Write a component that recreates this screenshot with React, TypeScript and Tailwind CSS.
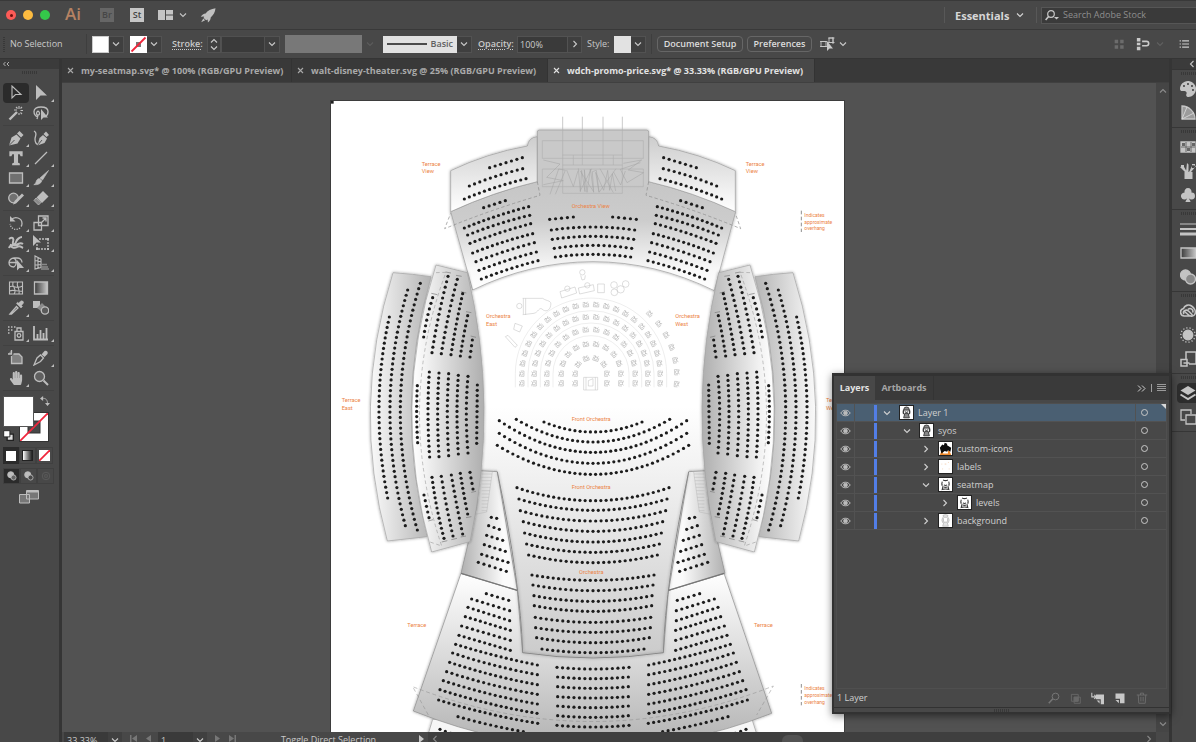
import type { ReactNode } from "react";
import { BsSuitClubFill } from "react-icons/bs";
import { FaHandPaper, FaPalette } from "react-icons/fa";

type Row = [number, number, number, number, number?, number?];

/* ---------- small shared pieces ---------- */

function Glyph({ size = 16, children }: { size?: number; children: ReactNode }) {
  return (
    <svg
      width={size}
      height={size}
      viewBox="0 0 16 16"
      fill="none"
      stroke="currentColor"
      strokeWidth="1.3"
      className="shrink-0"
      aria-hidden="true"
    >
      {children}
    </svg>
  );
}

function Chevron({ dir = "down" }: { dir?: "down" | "up" | "right" | "left" }) {
  const paths = {
    down: "M1 2.5 4 5.5 7 2.5",
    up: "M1 5.5 4 2.5 7 5.5",
    right: "M2.5 1 5.5 4 2.5 7",
    left: "M5.5 1 2.5 4 5.5 7",
  };
  return (
    <svg width="8" height="8" viewBox="0 0 8 8" fill="none" stroke="currentColor" strokeWidth="1.1" className="shrink-0" aria-hidden="true">
      <path d={paths[dir]} />
    </svg>
  );
}

function DropButton({ label, dim = false }: { label: string; dim?: boolean }) {
  return (
    <button
      aria-label={label}
      className={`flex h-[17px] w-[15px] shrink-0 items-center justify-center ${dim ? "text-[#5c5c5c]" : "border border-l-0 border-[#525252] bg-[#3f3f3f] text-[#c8c8c8]"}`}
    >
      <Chevron />
    </button>
  );
}

function Grip() {
  return (
    <div className="mx-auto flex gap-px">
      {Array.from({ length: 8 }, (_, i) => (
        <span key={i} className="h-[3px] w-px bg-[#383838]" />
      ))}
    </div>
  );
}

/* ---------- title bar ---------- */

function TitleBar() {
  return (
    <header className="flex h-[30px] shrink-0 items-center border-t border-b border-[#393939] bg-[#484848]">
      <div className="flex gap-[7px] pl-[6px]">
        <button aria-label="Close window" className="flex size-[10px] items-center justify-center rounded-full bg-[#fc5b57]">
          <span className="size-[3px] rounded-full bg-[#6a0f0c]" />
        </button>
        <button aria-label="Minimize window" className="size-[10px] rounded-full bg-[#fdbc40]" />
        <button aria-label="Zoom window" className="size-[10px] rounded-full bg-[#34c84a]" />
      </div>
      <span className="ml-[15px] w-[35px] pb-1 font-['Open_Sans',sans-serif] text-[17px] leading-none font-semibold text-[#b58263]">Ai</span>
      <button className="size-[14px] bg-[#666] text-center text-[9px] leading-[14px] font-semibold text-[#464646]">Br</button>
      <button className="ml-4 size-[14px] bg-[#c6c6c6] text-center text-[9px] leading-[14px] font-semibold text-[#444]">St</button>
      <button aria-label="Arrange documents" className="ml-[14px] flex items-center gap-[6px] text-[#c4c4c4]">
        <svg width="15" height="10" viewBox="0 0 15 11" preserveAspectRatio="none" fill="currentColor" aria-hidden="true">
          <path d="M0 0h7v11H0zM8 0h7v5H8zM8 6h7v5H8z" />
        </svg>
        <Chevron />
      </button>
      <button aria-label="GPU performance" className="ml-[13px] text-[#c0c0c0]">
        <svg width="16" height="15" viewBox="0 0 16 15" fill="currentColor" aria-hidden="true">
          <path d="M15.5.3C11 .8 7.6 2.8 5.6 5.6 3.6 5.7 2 7 .8 8.8l3.400-.3-.6 1.400 2.600 2.300 1.500-.8.2 3c1.700-1.300 2.800-3 2.800-5C13.300 7.200 15.200 4.300 15.500.3z" />
          <path d="M3.300 10.600 1.200 14.300l3.900-2z" />
        </svg>
      </button>
      <div className="ml-auto flex items-center">
        <span className="h-4 w-px bg-[#585858]" />
        <label className="ml-[10px] flex w-[81px] items-center text-[#d6d6d6]">
          <select aria-label="Workspace" className="w-[61px] appearance-none bg-transparent text-[11px] leading-none font-bold">
            <option>Essentials</option>
          </select>
          <Chevron />
        </label>
        <span className="mr-[4px] h-4 w-px bg-[#585858]" />
        <label className="flex h-[17px] w-[155px] items-center gap-[4px] border border-r-0 border-[#565656] bg-[#3a3a3a] pl-[3px] text-[#c8c8c8]">
          <svg width="14" height="11" viewBox="0 0 14 11" fill="none" stroke="currentColor" aria-hidden="true">
            <circle cx="6" cy="4" r="3.300" strokeWidth="1.200" />
            <path d="M3.600 6.500.6 10" strokeWidth="1.600" />
            <path d="M9 7h5l-2.500 2.600z" fill="currentColor" stroke="none" />
          </svg>
          <input aria-label="Search Adobe Stock" placeholder="Search Adobe Stock" className="w-[120px] bg-transparent text-[9px] outline-none placeholder:text-[#8e8e8e]" />
        </label>
      </div>
    </header>
  );
}

/* ---------- control bar ---------- */

function ControlBar() {
  return (
    <div className="flex h-[29px] shrink-0 items-center border-b border-[#353535] bg-[#484848] text-[#cacaca]">
      <div className="ml-[3px] flex flex-col gap-px">
        {Array.from({ length: 8 }, (_, i) => (
          <span key={i} className="h-px w-[2px] bg-[#383838]" />
        ))}
      </div>
      <span className="ml-[5px] w-[76px] shrink-0">No Selection</span>
      <span className="h-5 w-px bg-[#3e3e3e]" />
      <button aria-label="Fill" className="ml-[5px] size-[17px] shrink-0 border border-[#ccc] bg-white" />
      <DropButton label="Fill colours" />
      <button aria-label="Stroke colour" className="ml-[6px] size-[17px] shrink-0 bg-white">
        <svg viewBox="0 0 17 17" width="17" height="17" aria-hidden="true">
          <rect x="6" y="6" width="5" height="5" fill="#777" />
          <path d="M1.500 15.500 15.500 1.500" stroke="#f0263c" strokeWidth="1.800" />
        </svg>
      </button>
      <DropButton label="Stroke colours" />
      <label htmlFor="stroke-width" className="ml-[10px] w-[35px] shrink-0 font-semibold underline decoration-dotted underline-offset-2">Stroke:</label>
      <div className="flex h-[17px] w-[14px] shrink-0 flex-col items-center justify-between border border-[#525252] bg-[#404040]">
        <button aria-label="Increase stroke" className="h-[7px] overflow-hidden"><Chevron dir="up" /></button>
        <button aria-label="Decrease stroke" className="h-[8px] overflow-hidden"><Chevron /></button>
      </div>
      <input id="stroke-width" className="h-[17px] w-[44px] shrink-0 border border-[#505050] bg-[#3a3a3a] px-1 outline-none" />
      <DropButton label="Stroke widths" />
      <button aria-label="Variable width profile" className="ml-[5px] h-[18px] w-[77px] shrink-0 bg-[#787878]" />
      <DropButton label="Width profiles" dim />
      <button className="ml-[6px] flex h-[17px] w-[74px] shrink-0 items-center justify-between bg-[#e2e2e2] px-1 font-semibold text-[#606060]">
        <span className="h-[2px] w-10 bg-[#4c4c4c]" />
        Basic
      </button>
      <DropButton label="Brushes" />
      <label htmlFor="opacity" className="ml-[6px] w-[39px] shrink-0 font-semibold underline decoration-dotted underline-offset-2">Opacity:</label>
      <input id="opacity" defaultValue="100%" className="h-[17px] w-[51px] shrink-0 border border-[#525252] bg-[#3a3a3a] px-[2px] outline-none" />
      <button aria-label="Opacity slider" className="flex h-[17px] w-[14px] shrink-0 items-center justify-center border border-l-0 border-[#525252] bg-[#3f3f3f]">
        <Chevron dir="right" />
      </button>
      <span className="ml-[5px] w-[27px] shrink-0">Style:</span>
      <button aria-label="Graphic style" className="size-[17px] shrink-0 bg-[#e2e2e2]" />
      <DropButton label="Graphic styles" />
      <span className="ml-[5px] h-5 w-px bg-[#3e3e3e]" />
      <button className="ml-[5px] h-4 w-[86px] shrink-0 rounded-sm border border-[#666] font-semibold text-[#dcdcdc]">Document Setup</button>
      <button className="ml-[4px] h-4 w-[65px] shrink-0 rounded-sm border border-[#666] font-semibold text-[#dcdcdc]">Preferences</button>
      <button aria-label="Select similar" className="ml-2 flex items-center gap-[3px]">
        <Glyph>
          <path d="M1 5.500h5v5H1zM0 5.500h7M0 10.500h7M9 2h4v4.500H9zM8 2h6.500M8 6.500h6.500M13 1v7" strokeWidth=".9" />
          <path d="M7 5v10l2.500-2.600H13z" fill="currentColor" stroke="none" />
        </Glyph>
        <Chevron />
      </button>
      <div className="ml-auto flex items-center gap-[11px] pr-[7px]">
        <span className="text-[#6c6c6c]">
          <Glyph size={11}>
            <path d="M1 1h5v5H1zM9 1h5v5H9zM1 9h5v5H1zM9 9h5v5H9z" fill="currentColor" stroke="none" />
          </Glyph>
        </span>
        <button aria-label="Align to" className="flex items-center gap-[6px]">
          <Glyph size={14}>
            <path d="M1 1h4v4H1zM1 6.500h4v3H1zM1 11h4v4H1z" fill="currentColor" stroke="none" />
            <path d="M7 5h5a2.500 2.500 0 0 1 0 5H7" strokeWidth="1.800" />
          </Glyph>
          <span className="text-[#606060]"><Chevron /></span>
        </button>
        <button aria-label="Panel menu" className="pl-1">
          <Glyph size={10}>
            <path d="M1 3h2M1 8h2M1 13h2M5 3h11M5 8h11M5 13h11" strokeWidth="1.800" />
          </Glyph>
        </button>
      </div>
    </div>
  );
}

/* ---------- tools ---------- */

const tools: Record<string, ReactNode> = {
  Selection: <path d="M4 1v12l3.500-3.500H13z" strokeWidth="1.100" />,
  "Direct Selection": <path d="M3 0v15l4.500-4.500H14z" fill="currentColor" stroke="none" />,
  "Magic Wand": (
    <>
      <path d="M1.500 14.500 9 7" strokeWidth="2.400" />
      <path d="M11 1v3M11 8v2M6 5h3M12.500 5.500H15M8 2l1.500 1.500M14 2l-1.500 1.500M14 9l-1.500-1.500" strokeWidth="1.100" />
    </>
  ),
  Lasso: (
    <>
      <path d="M5 12C2 11 1 9 1 6.500 1 3.500 4 2 8 2s7 1.500 7 4.500-1 4-2 4.500M5 6c-2 1-2 4 0 4s2-3 0-4zM5 10l-1 4" />
      <path d="M8 4v11l2.500-2.500H15z" fill="currentColor" stroke="none" />
    </>
  ),
  Pen: (
    <>
      <path d="M1 15.500 3.500 7.500l5-3 4 4-3 5z" fill="currentColor" stroke="none" />
      <path d="M9 3.500 11.500 1 15.500 5 13 7.500z" fill="currentColor" stroke="none" />
      <path d="m1 15.500 5.500-5.500" stroke="#484848" strokeWidth=".9" />
    </>
  ),
  Curvature: (
    <>
      <path d="M4.500 15.500 6.500 8 10 5l4 3.500-2.500 4.500z" fill="currentColor" stroke="none" />
      <path d="M10.500 4 13 1.500 16 5l-2.500 2z" fill="currentColor" stroke="none" />
      <path d="M1 1c4 2 1 5 1 8s1 5 3 5.500" />
      <path d="m4.500 15.500 4.500-5.500" stroke="#484848" strokeWidth=".9" />
    </>
  ),
  Type: <path d="M2 2h12v3.500h-1L12 3.500H9.400V13l1.800.8v.7H4.800v-.7l1.800-.8V3.500H4L3 5.500H2z" fill="currentColor" />,
  "Line Segment": <path d="M2 14 14 2" />,
  Rectangle: <path d="M1.500 3h13v10h-13z" fill="#707070" />,
  Paintbrush: (
    <path d="M15.500.5 9.500 10 7 8zM6.300 8.600l2.500 2.200c-.8 3-4 4.200-8 3.900 2-.7 2-2.300 2.700-4 .5-1.200 1.600-2 2.800-2.100z" fill="currentColor" strokeWidth=".7" />
  ),
  Shaper: (
    <>
      <circle cx="5.500" cy="8" r="4.800" fill="#707070" />
      <path d="M5 14.500 6.500 11 14 3.500l2 2-8 8z" fill="currentColor" stroke="none" />
    </>
  ),
  Eraser: (
    <>
      <path d="M10 1 15.500 6.500 9 13 3.500 7.500z" fill="currentColor" stroke="none" />
      <path d="M3 8 1 10.500l4.500 4.500 2.500-2.500z" fill="#8a8a8a" stroke="currentColor" strokeWidth=".8" />
    </>
  ),
  Rotate: (
    <>
      <path d="M3 5c4-4.500 11-2 11 3.500 0 1.500-.5 2.500-1 3" />
      <path d="M12 13c-4 3-9 1-10-4" strokeDasharray="1.200 1.300" />
      <path d="M2 1v5.500h5.500z" fill="currentColor" stroke="none" />
    </>
  ),
  Scale: <path d="M5.500 1h9.500v9.500H5.500zM1 7.500h7.500V15H1zM8 8l5-5M9.500 3H13v3.500" />,
  Width: (
    <path d="M1 4c4-3 5 0 4 3s2 3 3 0 4-5 6-5M1 13c2-5 4-2 7-3s4-3 7-1M3 9c-1 3 3 5 6 3s4 0 6 1" strokeWidth="2" />
  ),
  "Free Transform": (
    <>
      <path d="M6 4h9v10H4V8" strokeDasharray="2 1" />
      <path d="M0 0v11l3.500-3.500H8z" fill="currentColor" stroke="none" />
      <path d="M14 3h2v2h-2zM14 13h2v2h-2zM3 13h2v2H3z" fill="currentColor" stroke="none" />
    </>
  ),
  "Shape Builder": (
    <>
      <path d="M6 12C2 12 1 9.500 1 7.500S3 3 6 3h3c3 0 5 2 5 4.500M6 3c3 2 3 7 0 9M1 7.500h8" />
      <path d="M9 5v10.500l2.500-2.500H16z" fill="currentColor" stroke="none" />
    </>
  ),
  "Perspective Grid": (
    <>
      <path d="M2 1v13l6-1.500V4zM2 5.500l6 1M2 10l6-.5M5 2.500v10.800" strokeWidth="1.100" />
      <path d="M8 12h7M8 9.500h6M8 14h8" stroke="#8a8a8a" strokeWidth="1.300" />
    </>
  ),
  Mesh: <path d="M1.500 2h13v12h-13zM1.500 7c4-3 6 3 13-1M5 2c-2 5 5 7 1 12M10 2c-3 4 3 7 1 12M1.500 11c4-2 8 1 13 0" strokeWidth="1.100" />,
  Gradient: <path d="M1.500 2h13v12h-13z" fill="url(#ramp)" />,
  Eyedropper: (
    <>
      <path d="M2 14 8.500 6.500l1.500 1.500-6.500 6z" strokeWidth="1.300" />
      <path d="M8.500 3.500 13 8l1.500-1.500-1-1L15.500 3c.5-1.500-1.500-2.500-2.500-2L10.500 3l-1-.8z" fill="currentColor" stroke="currentColor" strokeWidth=".5" />
    </>
  ),
  Blend: (
    <>
      <rect x="0" y="1" width="7" height="7" fill="currentColor" stroke="none" />
      <path d="m4 8 5-5 3.500 3.500-4.500 4.500z" fill="#8a8a8a" stroke="none" />
      <circle cx="12" cy="10.500" r="3.700" fill="#5a5a5a" />
    </>
  ),
  "Symbol Sprayer": (
    <>
      <path d="M7 6.500h8V15H7zM9 6V3h4v3" />
      <circle cx="11" cy="10.500" r="1.800" />
      <path d="M0 2h1.500M3 2h1.500M0 5h1.500M3 5h1.500M0 8h1.500M6 2h1.500" strokeWidth="1.500" />
    </>
  ),
  "Column Graph": <path d="M1 1v13.500h14M4.500 13.500V9M7.500 13.500V5M10.500 13.500V8M13.500 13.500V3" strokeWidth="1.800" />,
  Artboard: <path d="M3.500 0v4H0M3.500 6v7.500H14V7l-3-3H5.500" fill="#808080" />,
  Slice: (
    <>
      <path d="M1 15 4 8l3.500-3 3 3-3 3.500z" />
      <path d="m8.500 4.500 3-3.500c2-1 4 1 3 3L11.500 7z" fill="currentColor" stroke="none" />
    </>
  ),
  Zoom: (
    <>
      <circle cx="6.500" cy="6.500" r="5" fill="#606060" />
      <path d="m10.500 10.500 4.500 4.500" strokeWidth="2" />
    </>
  ),
};

const toolGroups: string[][] = [
  ["Selection", "Direct Selection", "Magic Wand", "Lasso"],
  ["Pen", "Curvature", "Type", "Line Segment", "Rectangle", "Paintbrush", "Shaper", "Eraser"],
  ["Rotate", "Scale", "Width", "Free Transform", "Shape Builder", "Perspective Grid"],
  ["Mesh", "Gradient", "Eyedropper", "Blend"],
  ["Symbol Sprayer", "Column Graph"],
  ["Artboard", "Slice", "Hand", "Zoom"],
];

const singleTools = ["Selection", "Magic Wand", "Lasso", "Curvature", "Mesh", "Gradient", "Blend", "Artboard", "Zoom"];

function ToolPanel() {
  return (
    <aside className="flex w-[59px] shrink-0 flex-col bg-[#484848] text-[#bdbdbd]">
      <div className="flex h-[10px] items-center bg-[#3b3b3b] pl-[2px] text-[#b0b0b0]">
        <svg width="8" height="6" viewBox="0 0 8 6" fill="none" stroke="currentColor" aria-hidden="true">
          <path d="M3.500 1 1.500 3l2 2M7 1 5 3l2 2" />
        </svg>
      </div>
      <div className="flex h-3 pt-[2px]"><Grip /></div>
      {toolGroups.map((group, i) => (
        <div key={i} className="mr-[5px] ml-[3px] grid grid-cols-2 border-b border-[#414141] py-[2px]">
          {group.map((name) => (
            <button
              key={name}
              aria-label={name}
              className={`relative flex h-5 items-center justify-center ${name === "Selection" ? "rounded-sm bg-[#2b2b2b]" : ""}`}
            >
              {name === "Hand" ? <FaHandPaper size={14} /> : <Glyph>{tools[name]}</Glyph>}
              {!singleTools.includes(name) && (
                <svg width="3" height="3" viewBox="0 0 3 3" className="absolute right-0 bottom-px" aria-hidden="true">
                  <path d="M3 0v3H0z" fill="currentColor" />
                </svg>
              )}
            </button>
          ))}
        </div>
      ))}
      <div className="relative mt-[5px] ml-[3px] h-[46px] w-[46px]">
        <button aria-label="Stroke" className="absolute right-0 bottom-0 size-[30px] border border-[#333] bg-white">
          <svg width="28" height="28" viewBox="0 0 28 28" aria-hidden="true">
            <rect x="8" y="8" width="12" height="12" fill="#484848" stroke="#333" />
            <path d="M0 28 28 0" stroke="#f0263c" strokeWidth="1.800" />
          </svg>
        </button>
        <button aria-label="Fill" className="absolute top-0 left-0 size-[31px] border border-[#555] bg-white" />
        <button aria-label="Swap fill and stroke" className="absolute top-0 -right-[1px]">
          <Glyph size={10}>
            <path d="M4 4c5-1 8 2 8 8" />
            <path d="M5 0v8L0 4zM8 11h8l-4 5z" fill="currentColor" stroke="none" />
          </Glyph>
        </button>
        <button aria-label="Default fill and stroke" className="absolute bottom-[1px] left-0">
          <Glyph size={11}>
            <path d="M6 6h9v9H6z" strokeWidth="2" stroke="#222" fill="#ddd" />
            <path d="M1 1h9v9H1z" fill="white" stroke="#222" />
          </Glyph>
        </button>
      </div>
      <div className="mt-[5px] ml-[3px] flex">
        <button aria-label="Colour" className="flex h-[17px] w-4 items-center justify-center bg-[#2b2b2b]">
          <span className="size-[10px] bg-white" />
        </button>
        <button aria-label="Gradient fill" className="flex h-[17px] w-[17px] items-center justify-center border border-[#404040]">
          <span className="size-[11px] border border-[#222] bg-linear-to-r from-white to-[#222]" />
        </button>
        <button aria-label="None" className="flex h-[17px] w-[17px] items-center justify-center border border-[#404040]">
          <svg width="11" height="11" viewBox="0 0 11 11" aria-hidden="true">
            <rect width="11" height="11" fill="white" />
            <path d="M0 11 11 0" stroke="#f0263c" strokeWidth="1.800" />
          </svg>
        </button>
      </div>
      <div className="mt-[4px] ml-[3px] flex">
        {["Draw Normal", "Draw Behind", "Draw Inside"].map((mode, i) => (
          <button
            key={mode}
            aria-label={mode}
            className={`flex h-[16px] w-[17px] items-center justify-center border border-[#404040] ${i === 0 ? "bg-[#2b2b2b]" : ""} ${i === 2 ? "text-[#5e5e5e]" : ""}`}
          >
            <Glyph size={10}>
              {i === 2 ? (
                <>
                  <circle cx="8" cy="8" r="6" />
                  <path d="M6 6h4v4H6z" />
                </>
              ) : (
                <>
                  <circle cx="6" cy="6" r="5" fill="currentColor" />
                  <circle cx="10.500" cy="10.500" r="4" fill={i === 1 ? "#484848" : "#666"} />
                </>
              )}
            </Glyph>
          </button>
        ))}
      </div>
      <button aria-label="Change Screen Mode" className="mt-[6px] ml-[19px] w-5">
        <svg width="20" height="14" viewBox="0 0 20 14" fill="#777" stroke="currentColor" aria-hidden="true">
          <path d="M.5 4.500h10v8.500H.5zM7.500.5h12v8.500h-12z" />
          <path d="M8 1.500h11" strokeWidth="2" />
        </svg>
      </button>
    </aside>
  );
}

/* ---------- seat map ---------- */

// Each row is x1, y1, x2, y2 and, for curved rows, the point the curve passes halfway.
function Seats({ rows }: { rows: Row[] }) {
  return (
    <g fill="#1c1c1c" stroke="none">
      {rows.map(([x1, y1, x2, y2, mx, my], r) => {
        const hx = mx ?? (x1 + x2) / 2;
        const hy = my ?? (y1 + y2) / 2;
        const cx = 2 * hx - (x1 + x2) / 2;
        const cy = 2 * hy - (y1 + y2) / 2;
        const length = Math.hypot(hx - x1, hy - y1) + Math.hypot(x2 - hx, y2 - hy);
        const count = Math.max(1, Math.round(length / 16.2));
        return Array.from({ length: count + 1 }, (_, i) => {
          const t = i / count;
          const u = 1 - t;
          return (
            <circle
              key={`${r}-${i}`}
              cx={u * u * x1 + 2 * u * t * cx + t * t * x2}
              cy={u * u * y1 + 2 * u * t * cy + t * t * y2}
              r="4.800"
            />
          );
        });
      })}
    </g>
  );
}

const terraceViewRows: Row[] = [
  [269, 203, 367, 173],
  [208, 258, 368, 206, 287, 229],
  [193, 297, 378, 236, 284, 263],
  [251, 323, 316, 302],
  [193, 384, 386, 320, 288, 349],
  [203, 405, 389, 346, 295, 372],
  [210, 430, 392, 371, 300, 398],
  [218, 459, 398, 401, 307, 427],
  [228, 485, 403, 428, 315, 454],
  [237, 511, 409, 456, 322, 481],
  [244, 537, 414, 482, 328, 507],
  [449, 358, 520, 351],
];

const orchestraViewRows: Row[] = [
  [454, 390, 704, 390, 579, 381],
  [457, 418, 701, 418, 579, 409],
  [463, 445, 695, 445, 579, 436],
  [466, 471, 692, 471, 579, 463],
];

const eastRows: Row[] = [
  [178, 171, 173, 714, 147, 440],
  [233, 90, 226, 797, 180, 440],
  [271, 70, 262, 810, 211, 440],
];

const balconyRows: Row[] = [
  [308, 113, 281, 231, 292, 172],
  [354, 49, 306, 278, 327, 163],
  [382, 58, 334, 281, 355, 169],
  [398, 101, 363, 284, 379, 192],
  [413, 167, 391, 288, 401, 228],
  [427, 240, 420, 291],
  [262, 377, 263, 548, 260, 462],
  [298, 336, 299, 591, 294, 462],
  [327, 339, 327, 590, 323, 462],
  [356, 341, 356, 587, 352, 462],
  [385, 346, 385, 582, 381, 462],
  [414, 349, 414, 579, 409, 462],
  [442, 375, 440, 550],
  [282, 705, 297, 773],
  [306, 652, 342, 835, 321, 744],
  [334, 649, 369, 828, 350, 740],
  [364, 645, 398, 822, 380, 734],
  [391, 640, 413, 762, 401, 700],
  [420, 637, 429, 687],
];

const frontRows: Row[] = [
  [642, 486, 936, 486, 789, 516],
  [559, 478, 1019, 478, 789, 546],
  [508, 482, 1070, 482, 789, 577],
  [508, 520, 1070, 520, 789, 610],
  [502, 556, 1076, 556, 789, 643],
];

const orchestraRows: Row[] = [
  [411, 113, 867, 113, 639, 152],
  [417, 147, 861, 147, 639, 181],
  [421, 182, 857, 182, 639, 213],
  [430, 215, 848, 215, 639, 244],
  [434, 249, 844, 249, 639, 276],
  [440, 282, 838, 282, 639, 307],
  [446, 315, 832, 315, 639, 338],
  [456, 375, 822, 375, 639, 391],
  [459, 405, 819, 405, 639, 422],
  [462, 437, 816, 437, 639, 454],
  [463, 467, 815, 467, 639, 484],
  [466, 502, 812, 502, 639, 517],
  [467, 533, 811, 533, 639, 547],
  [470, 563, 808, 563, 639, 578],
  [486, 597, 792, 597, 639, 608],
  [531, 652, 747, 652, 639, 657],
  [533, 681, 745, 681, 639, 686],
  [533, 710, 745, 710, 639, 715],
  [533, 740, 745, 740, 639, 744],
  [533, 768, 745, 768, 639, 773],
  [533, 797, 745, 797, 639, 802],
  [531, 826, 747, 826, 639, 831],
];

const terraceRows: Row[] = [
  [334, 202, 350, 205],
  [326, 227, 358, 238],
  [320, 256, 368, 271],
  [313, 284, 376, 304],
  [305, 313, 384, 337],
  [295, 337, 379, 364],
  [319, 431, 386, 451],
  [275, 447, 389, 482],
  [264, 472, 389, 512],
  [256, 500, 391, 541],
  [245, 528, 391, 571],
  [237, 556, 391, 601],
  [227, 583, 472, 645, 348, 617],
  [218, 609, 472, 674, 344, 646],
  [209, 637, 472, 704, 339, 675],
  [200, 665, 472, 733, 335, 704],
  [190, 692, 472, 762, 330, 732],
  [180, 719, 471, 790, 325, 760],
  [176, 750, 473, 820, 323, 790],
  [234, 800, 430, 845, 332, 825],
  [180, 838, 212, 850],
];

const musicianArcs = [48, 90, 133, 171, 208];

function Musicians() {
  const spots: { x: number; y: number; a: number }[] = [];
  musicianArcs.forEach((r) => {
    const count = Math.round((Math.PI * r) / 31);
    for (let i = 0; i <= count; i++) {
      const a = Math.PI * (i / count);
      spots.push({ x: 783 - r * Math.cos(a), y: 341 - r * Math.sin(a), a: (a * 180) / Math.PI - 90 });
    }
    spots.push({ x: 783 - r, y: 370, a: -90 }, { x: 783 + r, y: 370, a: 90 });
  });
  [-5, 3, 11, 20, 29, 38, 47].forEach((deg) => {
    const a = (deg * Math.PI) / 180;
    spots.push({ x: 783 + 258 * Math.cos(a), y: 350 - 258 * Math.sin(a), a: 90 - deg });
  });
  return (
    <g fill="none" stroke="#a8a8a8" strokeWidth="1.500">
      {[114, 152, 189, 227].map((r) => (
        <path key={r} stroke="#dcdcdc" d={`M${783 - r} 382V341A${r} ${r} 0 0 1 ${783 + r} 341V382`} />
      ))}
      {spots.map((s, i) => (
        <g key={i} transform={`translate(${s.x} ${s.y}) rotate(${s.a})`}>
          <path d="M-8 -3v10h16v-10M-5 -8l4 5M6 -8l-4 5M-9 -6h6" />
          <circle r="4.500" />
        </g>
      ))}
      <g stroke="#bdbdbd">
        <path d="M761 352h42v38h-42zM768 352v38M796 352v38M775 362l14 -6v22h-14z" />
        <path d="M580 115v48M587 115v50M578 115h60c14 10 28 5 24 22 -3 16 -16 20 -26 10 -8 -6 -12 10 -24 13l-34 4" />
        <circle cx="568" cy="138" r="8" />
        <path d="M555 190l22 8 -8 18 -18 -8zM526 230l8 -4 28 30 -7 6z" />
        <path d="M690 95l45 -14 5 18 -45 15zM745 84l45 -10 3 18 -44 10zM803 72h20v26h-20z" />
        <circle cx="712" cy="86" r="8" />
        <circle cx="772" cy="76" r="8" />
        <circle cx="757" cy="37" r="8" />
        <path d="M752 46l4 14 8 -2 2 -12" />
        <circle cx="852" cy="75" r="10" />
        <circle cx="872" cy="88" r="11" />
        <circle cx="887" cy="72" r="10" />
        <circle cx="853" cy="97" r="10" />
      </g>
    </g>
  );
}

function SideBlock() {
  return (
    <g stroke="#a2a2a2" strokeWidth="2">
      <g filter="url(#soft)">
        <path d="M189 38Q250 42 303 50Q190 440 292 830L172 843Q62 440 189 38z" fill="url(#east)" />
        <path d="M318 15L412 38Q508 440 420 845L305 876Q180 440 318 15z" fill="url(#balcony)" />
      </g>
      <path
        d="M318 38L348 37Q196 440 335 858L300 846"
        fill="none"
        strokeDasharray="11 8"
        strokeWidth="1.500"
        stroke="#8a8a8a"
      />
      <path d="M347 36l16 3M378 46l17 3M393 95l16 4M408 155l16 3M422 228l16 4M304 100l18 4M424 697l14 -3M408 773l16 -3M295 783l14 -4M335 846l17 -4M364 839l17 -4M392 831l16 -3" stroke="#777" strokeWidth="2" />
      <Seats rows={eastRows} />
      <Seats rows={balconyRows} />
    </g>
  );
}

function SeatMap() {
  const flip = "translate(1572 0) scale(-1 1)";
  const stairs = Array.from({ length: 12 }, (_, i) => i);
  return (
    <svg viewBox="0 0 1539 1893" width="513" height="631" role="img" aria-label="Concert hall seat map" className="shrink-0 bg-white shadow-[0_0_0_1px_#3d3d3d]">
      <defs>
        <linearGradient id="east">
          <stop offset="0" stopColor="#fafafa" />
          <stop offset="1" stopColor="#b4b4b4" />
        </linearGradient>
        <linearGradient id="balcony">
          <stop offset="0" stopColor="#ffffff" />
          <stop offset=".2" stopColor="#f2f2f2" />
          <stop offset="1" stopColor="#aeaeae" />
        </linearGradient>
        <linearGradient id="tview" x2="0" y2="1">
          <stop offset="0" stopColor="#cdcdcd" />
          <stop offset="1" stopColor="#ffffff" />
        </linearGradient>
        <linearGradient id="oview" x2="0" y2="1">
          <stop offset="0" stopColor="#c6c6c6" />
          <stop offset=".35" stopColor="#cccccc" />
          <stop offset=".8" stopColor="#f8f8f8" />
          <stop offset="1" stopColor="#ffffff" />
        </linearGradient>
        <linearGradient id="main" gradientUnits="userSpaceOnUse" x1="0" x2="0" y1="-130" y2="620">
          <stop offset="0" stopColor="#ffffff" />
          <stop offset="1" stopColor="#cbcbcb" />
        </linearGradient>
        <linearGradient id="wing">
          <stop offset="0" stopColor="#b0b0b0" />
          <stop offset=".75" stopColor="#fbfbfb" />
        </linearGradient>
        <linearGradient id="lower" x2="0" y2="1">
          <stop offset="0" stopColor="#ffffff" />
          <stop offset="1" stopColor="#b2b2b2" />
        </linearGradient>
        <filter id="soft" x="-10%" y="-10%" width="120%" height="120%">
          <feDropShadow dx="0" dy="0" stdDeviation="4" floodColor="#000" floodOpacity=".4" />
        </filter>
      </defs>

      {/* stage end */}
      <g transform="translate(207 -3)" stroke="#9a9a9a" strokeWidth="2">
        <g filter="url(#soft)">
          <path d="M152 335Q280 276 412 245L746 245Q880 276 1007 335L943 572Q765 485 579 485T218 570z" fill="url(#oview)" />
          <path d="M152 212Q260 160 382 138Q386 112 412 110V245Q280 276 152 335z" fill="url(#tview)" />
          <path d="M1006 212Q898 160 776 138Q772 112 746 110V245Q878 276 1006 335z" fill="url(#tview)" />
          <path d="M412 246V96q0 -6 6 -6H740q6 0 6 6V246" fill="#c9c9c9" />
        </g>
        <path d="M414 240H744V256H414z" fill="#c9c9c9" stroke="none" />
        <g fill="none" stroke="#b0b0b0">
          <path d="M488 50V280H667V50M547 50V195M609 50V195M427 122H730V175H427zM427 207H730V260H427zM487 165H667" />
          <path d="M488 195H667M520 165v30M640 165v30" />
          <path d="M535 205l6 70 4 -64 10 64 -2 -66 8 68 10 -70 10 70 -4 -62 12 -4 8 66 -10 -60 24 54 12 -60 6 60 8 -50 10 52M540 212l40 62M575 206l-34 66M600 206l40 72M648 206l-50 70M450 283l26 -76 20 4 -30 72M430 180l50 12 -40 40 50 10 -60 12M670 190l55 -10 -40 30 46 8 -50 30 -20 -40 60 -20M500 210l20 50 14 -48M640 215l22 40 14 -42" stroke="#a2a2a2" strokeWidth="1.500" />
        </g>
        <path d="M412 245L420 286Q270 330 134 386L152 340M746 245L738 286Q888 330 1022 386L1006 340" fill="none" strokeDasharray="10 7" stroke="#8a8a8a" />
        <Seats rows={terraceViewRows} />
        <Seats rows={orchestraViewRows} />
      </g>
      <g transform={`${flip} translate(207 -3)`}>
        <Seats rows={terraceViewRows} />
      </g>

      {/* main floor and rear terrace */}
      <g transform="translate(147 1047)" stroke="#8a8a8a" strokeWidth="2">
        <path d="M290 -130H988L978 66H300z" fill="url(#main)" stroke="none" />
        <g filter="url(#soft)">
          <path d="M158 808L100 1000H1178L1116 808z" fill="#f6f6f6" stroke="#999" />
          <path d="M243 370L412 421L428 608H850L865 421L1032 370L1175 790Q640 1000 100 783z" fill="url(#lower)" />
          <path d="M300 62L352 65L412 421L243 370L290 170z" fill="url(#wing)" />
          <g transform="translate(1278 0) scale(-1 1)">
            <path d="M300 62L352 65L412 421L243 370L290 170z" fill="url(#wing)" />
          </g>
        </g>
        <path d="M352 64Q422 400 428 608Q640 640 850 608Q856 400 926 64V-130H352z" fill="url(#main)" stroke="none" />
        <path d="M352 65Q422 400 428 608Q640 640 850 608Q856 400 926 65" fill="none" strokeWidth="3" filter="url(#soft)" />
        <path d="M243 370L412 421M865 421L1032 370" strokeWidth="4" stroke="#777" />
        <path d="M145 795L98 710Q640 920 1180 708L1130 795" fill="none" strokeDasharray="12 8" strokeWidth="1.500" />
        <Seats rows={orchestraRows} />
        <Seats rows={terraceRows} />
        <g transform="translate(1278 0) scale(-1 1)">
          <Seats rows={terraceRows} />
        </g>
        {[false, true].map((right) => (
          <g key={String(right)} transform={right ? "translate(1278 0) scale(-1 1)" : undefined} fill="none" stroke="#a5a5a5" strokeWidth="1">
            <path d="M337 66L320 186L290 192" />
            {stairs.map((i) => (
              <path key={i} d={`M305 ${72 + i * 10}H${336 - i * 1.4}`} />
            ))}
          </g>
        ))}
      </g>

      <g transform="translate(-3 477)">
        <SideBlock />
        <Seats rows={frontRows} />
        <Musicians />
      </g>
      <g transform={`${flip} translate(-3 477)`}>
        <SideBlock />
      </g>

      <g fill="#ec8344" fontFamily="Roboto, sans-serif" fontSize="17">
        <text x="272" y="194">Terrace</text>
        <text x="272" y="217">View</text>
        <text x="1244" y="194">Terrace</text>
        <text x="1244" y="217">View</text>
        <text x="722" y="320">Orchestra View</text>
        <text x="465" y="652">Orchestra</text>
        <text x="465" y="674">East</text>
        <text x="1033" y="652">Orchestra</text>
        <text x="1033" y="674">West</text>
        <text x="32" y="904">Terrace</text>
        <text x="32" y="926">East</text>
        <text x="1485" y="904">Terrace</text>
        <text x="1485" y="926">West</text>
        <text x="722" y="959">Front Orchestra</text>
        <text x="722" y="1164">Front Orchestra</text>
        <text x="744" y="1418">Orchestra</text>
        <text x="229" y="1579">Terrace</text>
        <text x="1269" y="1579">Terrace</text>
      </g>
      {[329, 1749].map((top) => (
        <g key={top} transform={`translate(1411 ${top})`} fill="#ec8344" fontFamily="Roboto, sans-serif" fontSize="15">
          <path d="M0 0v64" stroke="#777" strokeWidth="2.500" strokeDasharray="11 7" />
          <text x="9" y="19">Indicates</text>
          <text x="9" y="39">approximate</text>
          <text x="9" y="59">overhang</text>
        </g>
      ))}
      <path d="M0 0h8v8H0z" fill="#222" />
    </svg>
  );
}

/* ---------- document area ---------- */

const documents = [
  { name: "my-seatmap.svg* @ 100% (RGB/GPU Preview)", width: "w-[230px]" },
  { name: "walt-disney-theater.svg @ 25% (RGB/GPU Preview)", width: "w-[256px]" },
  { name: "wdch-promo-price.svg* @ 33.33% (RGB/GPU Preview)", width: "w-[267px]", active: true },
];

function DocumentTabs() {
  return (
    <div role="tablist" className="flex h-6 shrink-0 border-b border-[#404040] bg-[#393939] font-bold">
      {documents.map((doc) => (
        <div
          key={doc.name}
          className={`flex shrink-0 items-center gap-[7px] border-r border-[#333] pl-[5px] ${doc.width} ${doc.active ? "bg-[#484848] text-[#e2e2e2]" : "text-[#a9a9a9]"}`}
        >
          <button aria-label={`Close ${doc.name}`}>
            <svg width="7" height="7" viewBox="0 0 7 7" stroke="currentColor" strokeWidth="1.100" aria-hidden="true">
              <path d="m1 1 5 5M6 1 1 6" />
            </svg>
          </button>
          <button role="tab" aria-selected={!!doc.active} className="whitespace-nowrap">{doc.name}</button>
        </div>
      ))}
    </div>
  );
}

function StatusBar() {
  return (
    <footer className="flex h-[10px] shrink-0 items-start overflow-hidden bg-[#484848] text-[#c8c8c8]">
      <input aria-label="Zoom level" defaultValue="33.33%" className="ml-[2px] h-4 w-[44px] bg-[#3a3a3a] px-[3px] outline-none" />
      <button aria-label="Zoom presets" className="flex h-4 w-[14px] items-center justify-center bg-[#404040]"><Chevron /></button>
      <div className="flex w-[36px] items-center justify-center gap-2 pt-[3px] text-[#777]">
        <svg width="8" height="7" viewBox="0 0 8 7" fill="currentColor" aria-hidden="true"><path d="M0 0h1.500v7H0zM7 0v7L2 3.500z" /></svg>
        <svg width="5" height="7" viewBox="0 0 5 7" fill="currentColor" aria-hidden="true"><path d="M5 0v7L0 3.500z" /></svg>
      </div>
      <input aria-label="Artboard number" defaultValue="1" className="h-4 w-[35px] bg-[#3a3a3a] px-[3px] outline-none" />
      <button aria-label="Artboards" className="flex h-4 w-[14px] items-center justify-center bg-[#404040]"><Chevron /></button>
      <div className="flex w-[36px] items-center justify-center gap-2 pt-[3px] text-[#777]">
        <svg width="5" height="7" viewBox="0 0 5 7" fill="currentColor" aria-hidden="true"><path d="M0 0v7l5-3.500z" /></svg>
        <svg width="8" height="7" viewBox="0 0 8 7" fill="currentColor" aria-hidden="true"><path d="M6.500 0H8v7H6.500zM1 0v7l5-3.500z" /></svg>
      </div>
      <span className="w-[171px] shrink-0 text-center leading-4">Toggle Direct Selection</span>
      <button aria-label="Status menu" className="flex w-[14px] justify-center pt-[3px]">
        <svg width="5" height="8" viewBox="0 0 5 8" fill="currentColor" aria-hidden="true"><path d="M0 0v8l5-4z" /></svg>
      </button>
      <div className="flex h-4 min-w-0 flex-1 items-start justify-between bg-[#3f3f3f] px-[3px] pt-[3px] text-[#888]">
        <Chevron dir="left" />
        <span className="h-3 w-[21px] rounded-full bg-[#525252]" />
        <Chevron dir="right" />
      </div>
      <span className="w-[13px]" />
    </footer>
  );
}

/* ---------- right dock ---------- */

const dockGroups: { name: string; art: ReactNode }[][] = [
  [
    { name: "Color", art: <FaPalette size={16} className="-scale-x-100" /> },
    { name: "Color Guide", art: <Glyph><path d="M2 1c7 0 13 6 13 13H2z" fill="#9b9b9b" /><path d="M2 14 7 2M2 14 14 8" stroke="#ddd" strokeWidth=".8" /></Glyph> },
  ],
  [
    { name: "Swatches", art: <Glyph><path d="M1 3h14v10H1z" fill="currentColor" /><path d="M2 4h3v3H2zM7 9h3v3H7zM12 4h3v3h-3z" fill="#666" stroke="none" /><path d="M1 8h14M6 3v10M11 3v10" stroke="#555" strokeWidth=".8" /></Glyph> },
    { name: "Brushes", art: <Glyph><path d="M4.500 9h8v7h-8zM7 0l1.500 1.500V9H6zM0 4l3.500-1L7 9H5zM16 3l-3.500-1L9 9h2zM1 2h3v3H1zM12 1h3v4h-3z" fill="currentColor" stroke="none" /></Glyph> },
    { name: "Symbols", art: <BsSuitClubFill size={16} /> },
  ],
  [
    { name: "Stroke", art: <Glyph><path d="M0 3h16" strokeWidth="1" /><path d="M0 8h16" strokeWidth="2" /><path d="M0 13h16" strokeWidth="3" /></Glyph> },
    { name: "Gradient", art: <Glyph><path d="M1 3h15v10H1z" fill="url(#ramp)" /></Glyph> },
    { name: "Transparency", art: <Glyph><circle cx="5.500" cy="6" r="5" fill="currentColor" /><circle cx="10.500" cy="10" r="5" fill="#8a8a8a" /></Glyph> },
  ],
  [
    {
      name: "Libraries",
      art: (
        <Glyph>
          <path d="M9.500 13H4.500a3.800 3.800 0 0 1-1-7.500C4.500 2.500 8.500 1 11.500 3S16 8.500 15 11s-5 3-7 .5L4.500 8.500M4 11c-2-3 2-5 4.500-3l4 4M8 6.500c2.500-2.500 6 .5 4.500 3" strokeWidth="1.600" />
        </Glyph>
      ),
    },
    { name: "Appearance", art: <Glyph><circle cx="8" cy="8" r="4.800" fill="currentColor" /><circle cx="8" cy="8" r="7.200" strokeDasharray="1.200 2" /></Glyph> },
    { name: "Asset Export", art: <Glyph><path d="M6 8V1h10v12H9M1 8.500h6V15H1zM3.500 12h6" strokeWidth="1.500" /></Glyph> },
  ],
  [
    { name: "Layers", art: <Glyph><path d="M8 1l7.500 4.500L8 10 .5 5.500z" fill="currentColor" stroke="none" /><path d="M.5 9.500 8 14l7.500-4.500" strokeWidth="2" /></Glyph> },
    { name: "Artboards", art: <Glyph><path d="M5 11H1V1h10v4M6 6h10v9H6z" /></Glyph> },
  ],
];

function Dock() {
  return (
    <aside className="w-[24px] shrink-0 overflow-hidden bg-[#484848] text-[#c4c4c4]">
      <div className="flex h-[11px] items-center justify-end border-b border-[#353535] bg-[#3b3b3b]"><Chevron dir="left" /></div>
      {dockGroups.map((group, i) => (
        <div key={i} className="border-b border-[#363636] pb-[2px]">
          <div className="flex h-[7px] items-center pl-2"><Grip /></div>
          {group.map((item) => (
            <button
              key={item.name}
              aria-label={item.name}
              className="flex h-6 w-8 items-center pl-[5px]"
            >
              <span className={`flex h-5 w-8 items-center pl-[3px] ${item.name === "Layers" ? "rounded-sm bg-[#2d2d2d]" : ""}`}>{item.art}</span>
            </button>
          ))}
        </div>
      ))}
    </aside>
  );
}

/* ---------- layers panel ---------- */

const layers = [
  { name: "Layer 1", indent: "pl-[6px]", open: true, art: "map" },
  { name: "syos", indent: "pl-[26px]", open: true, art: "map" },
  { name: "custom-icons", indent: "pl-[45px]", open: false, art: "icons" },
  { name: "labels", indent: "pl-[45px]", open: false, art: "labels" },
  { name: "seatmap", indent: "pl-[45px]", open: true, art: "seats" },
  { name: "levels", indent: "pl-[64px]", open: false, art: "seats" },
  { name: "background", indent: "pl-[45px]", open: false, art: "back" },
];

function Thumb({ art }: { art: string }) {
  return (
    <svg width="15" height="15" viewBox="0 0 16 16" className="mr-[4px] ml-[8px] shrink-0 border border-[#222] bg-white" aria-hidden="true">
      {art === "map" && (
        <g fill="#888" stroke="#3c3c3c" strokeWidth="1.200">
          <path d="M5.500 2q2.500-1.500 5 0l1 3h-7zM6 9h4l1.500 5.500h-7z" />
          <path d="M4.500 5q-1 3 0 5M11.500 5q1 3 0 5" strokeWidth="1.800" />
          <path d="M6 7q2 2 4 0" />
        </g>
      )}
      {art === "icons" && (
        <>
          <path d="M3 11l2-1v4h6v-4l2 1 2 5H1z" fill="#f08a2c" />
          <path d="M1 7l3-4 2 1 1-3 3 1v2l5 3-1 5-3-2-1 2-3-1-4 3z" fill="#0c0c0c" />
        </>
      )}
      {art === "labels" && <path d="M3 5h1M11 3h1M7 5h2M12 11h1M4 11h1" stroke="#f3c9a8" />}
      {art === "seats" && (
        <g fill="none" stroke="#3a3a3a" strokeWidth="1.400">
          <path d="M5 2.500q3 1.500 6 0M4 4.500q-1 2.500 0 5M12 4.500q1 2.500 0 5M6 8.500q2 1.500 4 0M6 11q2 1 4 0M5 10l-1 4q4-1 8 0l-1-4" />
        </g>
      )}
      {art === "back" && (
        <g fill="#e4e4e4" stroke="#aaa" strokeWidth=".8">
          <path d="M5 1.500q3-1.500 6 0L10.500 4h-5zM6 10h4l1.500 5h-7zM4.500 4.500q-2 3 0 6l1-1v-4zM11.500 4.500q2 3 0 6l-1-1v-4z" />
        </g>
      )}
    </svg>
  );
}

function LayersPanel() {
  return (
    <section className="absolute right-[25px] bottom-[28px] flex h-[341px] w-[339px] flex-col border-2 border-t-[3px] border-[#323232] bg-[#484848] text-[#d0d0d0] shadow-[0_2px_8px_rgba(0,0,0,0.5)]">
      <div role="tablist" className="flex h-6 shrink-0 items-center bg-[#3a3a3a] font-bold">
        <button role="tab" aria-selected="true" className="h-full w-[41px] bg-[#484848] text-center text-[#e4e4e4]">Layers</button>
        <button role="tab" aria-selected="false" className="h-full w-[59px] border-r border-[#343434] text-center text-[#a6a6a6]">Artboards</button>
        <button aria-label="Collapse panel" className="ml-auto flex items-center">
          <svg width="9" height="7" viewBox="0 0 9 7" fill="none" stroke="currentColor" aria-hidden="true">
            <path d="m1 .5 3 3-3 3M5 .5l3 3-3 3" />
          </svg>
        </button>
        <span className="mx-[5px] h-2 w-px bg-[#a0a0a0]" />
        <button aria-label="Panel menu" className="mr-[3px] text-[#9a9a9a]">
          <svg width="9" height="8" viewBox="0 0 9 8" stroke="currentColor" aria-hidden="true">
            <path d="M0 .5h9M0 2.500h9M0 4.500h9M0 6.500h9" />
          </svg>
        </button>
      </div>
      <ul className="mx-[2px] mt-[3px] min-h-0 flex-1 border border-[#4f4f4f]">
        {layers.map((layer, i) => (
          <li key={layer.name} className={`flex h-[18px] items-center border-b border-[#525252] ${i === 0 ? "bg-[#4a5f72]" : ""}`}>
            <button aria-label={`Toggle visibility of ${layer.name}`} className="flex h-full w-[18px] items-center justify-center border-r border-[#525252] text-[#bcbcbc]">
              <svg width="11" height="8" viewBox="0 0 11 8" fill="none" stroke="currentColor" aria-hidden="true">
                <path d="M.8 4C3 .3 8 .3 10.200 4 8 7.700 3 7.700.8 4z" />
                <circle cx="5.500" cy="4" r="1.800" fill="currentColor" />
              </svg>
            </button>
            <button aria-label={`Lock ${layer.name}`} className="h-full w-[19px]" />
            <span className="h-4 w-[3px] bg-[#527ee6]" />
            <button className={`flex h-full min-w-0 flex-1 items-center border-r border-[#525252] text-left ${layer.indent}`}>
              <Chevron dir={layer.open ? "down" : "right"} />
              <Thumb art={layer.art} />
              {layer.name}
            </button>
            <button aria-label={`Target ${layer.name}`} className="relative flex h-full w-[30px] items-center pl-[5px]">
              <span className="size-[7px] rounded-full border border-[#c8c8c8]" />
              {i === 0 && (
                <svg width="5" height="5" viewBox="0 0 5 5" className="absolute top-0 right-0" aria-hidden="true">
                  <path d="M0 0h5v5z" fill="#d8d8d8" />
                </svg>
              )}
            </button>
          </li>
        ))}
      </ul>
      <div className="flex h-[18px] shrink-0 items-center gap-[10px] pr-[21px] pl-[3px]">
        <span className="mr-auto">1 Layer</span>
        <button aria-label="Locate object" className="text-[#767676]">
          <Glyph size={12}><circle cx="10" cy="6" r="4.500" /><path d="M6.500 9 1 15" strokeWidth="2" /></Glyph>
        </button>
        <button aria-label="Make clipping mask" className="text-[#686868]">
          <Glyph size={11}><path d="M2 2h10v10H2zM6 6h9v9H6z" /><path d="M6 6h6v6H6z" fill="currentColor" /></Glyph>
        </button>
        <button aria-label="Create new sublayer" className="text-[#c8c8c8]">
          <Glyph size={13}><path d="M6 3h10v12h-4V9H6z" fill="currentColor" stroke="none" /><path d="M7 10.500h3.500V14z" fill="currentColor" stroke="none" /><path d="M1 1v5h5M4 3.500 6.500 6 4 8.500" /></Glyph>
        </button>
        <button aria-label="Create new layer" className="text-[#c8c8c8]">
          <Glyph size={12}><path d="M2 2h12v13H8V9H2z" fill="currentColor" stroke="none" /><path d="M2 10.500h4.500V15z" fill="currentColor" stroke="none" /></Glyph>
        </button>
        <button aria-label="Delete selection" className="text-[#6c6c6c]">
          <Glyph size={12}><path d="M1 4h14M3 4l.7 11h8.600L13 4M6 4V1.500h4V4M6.500 6.500v6M9.500 6.500v6" /></Glyph>
        </button>
      </div>
      <div className="flex h-[5px] shrink-0 items-center border-t border-[#323232]"><Grip /></div>
    </section>
  );
}

export default function App() {
  return (
    <div className="relative flex h-screen flex-col overflow-hidden bg-[#484848] font-['Open_Sans','Noto_Sans',sans-serif] text-[9px] leading-[12px]">
      <svg width="0" height="0" className="absolute" aria-hidden="true">
        <linearGradient id="ramp">
          <stop offset="0" stopColor="#3a3a3a" />
          <stop offset="1" stopColor="#c8c8c8" />
        </linearGradient>
      </svg>
      <TitleBar />
      <ControlBar />
      <div className="flex min-h-0 flex-1">
        <ToolPanel />
        <main className="flex min-w-0 flex-1 flex-col border-x-[3px] border-[#353535]">
          <DocumentTabs />
          <div className="flex min-h-0 flex-1 bg-[#525252]">
            <div className="min-w-0 flex-1 overflow-hidden pt-[18px] pl-[269px]">
              <SeatMap />
            </div>
            <div className="flex w-[13px] shrink-0 flex-col items-center justify-between bg-[#454545] py-1 text-[#8c8c8c]">
              <Chevron dir="up" />
              <Chevron />
            </div>
          </div>
          <StatusBar />
        </main>
        <Dock />
      </div>
      <LayersPanel />
    </div>
  );
}
